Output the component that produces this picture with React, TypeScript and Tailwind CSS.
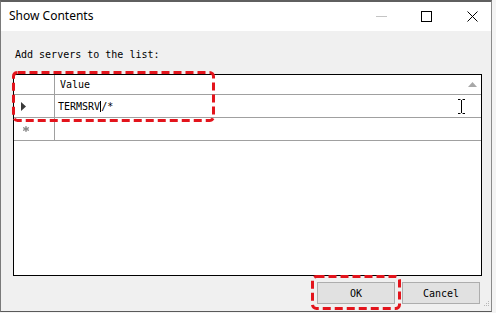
import React from "react"

const mono = { fontFamily: '"DejaVu Sans Mono", "Liberation Mono", monospace' }

function DashBox({ x, y, w, h }: { x: number; y: number; w: number; h: number }) {
  return (
    <svg
      className="absolute pointer-events-none"
      style={{ left: x, top: y }}
      width={w}
      height={h}
    >
      <rect
        x={1.5}
        y={1.5}
        width={w - 3}
        height={h - 3}
        rx={4}
        fill="none"
        stroke="#e3141c"
        strokeWidth={3}
        strokeDasharray="8 4"
      />
    </svg>
  )
}

export default function App() {
  return (
    <div className="relative w-[496px] h-[313px] bg-[#f4f4f4] overflow-hidden">
      <div className="flex flex-col w-[492px] h-[312px] border-t-2 border-l border-r border-b border-t-[#5f5f5f] border-l-[#7a7a7a] border-r-[#8a8a8a] border-b-[#5a5a5a] bg-[#f0f0f0]">
        {/* title bar */}
        <div className="flex items-center h-[29px] bg-white">
          <span
            className="flex-1 pl-[8px] pb-[1px] text-[12px] text-black"
            style={{ fontFamily: '"Noto Sans", "Liberation Sans", sans-serif' }}
          >
            Show Contents
          </span>
          <svg width="11" height="11" className="mr-[34px]">
            <line x1="0" y1="5.5" x2="11" y2="5.5" stroke="#c4c4c4" strokeWidth="1" />
          </svg>
          <svg width="11" height="11" className="mr-[35px]">
            <rect x="0.5" y="0.5" width="10" height="10" fill="none" stroke="#000" strokeWidth="1" />
          </svg>
          <svg width="11" height="11" className="mr-[13px]">
            <path d="M0.5 0.5 L10.5 10.5 M10.5 0.5 L0.5 10.5" stroke="#000" strokeWidth="1" />
          </svg>
        </div>

        {/* body */}
        <div className="flex flex-col flex-1 pt-[18px]">
          <div className="pl-[14px] text-[10px] leading-[12px] text-black" style={mono}>
            Add servers to the list:
          </div>

          <div className="mt-[13px] ml-[12px] w-[469px] h-[202px] border border-black bg-white flex flex-col">
            {/* header row */}
            <div className="flex h-[20px] border-b border-[#a0a0a0]">
              <div className="w-[41px] border-r border-[#a0a0a0]" />
              <div className="flex-1 flex items-center pl-[5px] text-[10px] text-black" style={mono}>
                Value
              </div>
              <svg width="9" height="5" className="self-center mr-[4px]">
                <path d="M0 5 L4.5 0 L9 5 Z" fill="#a8a8a8" />
              </svg>
            </div>

            {/* row 1 */}
            <div className="flex h-[23px] border-b border-[#a0a0a0]">
              <div className="w-[41px] border-r border-[#a0a0a0] flex items-center pl-[7px]">
                <svg width="5" height="9">
                  <path d="M0 0 L5 4.5 L0 9 Z" fill="#3a3a3a" />
                </svg>
              </div>
              <div className="flex-1 flex items-center pl-[3px] text-[10px] text-black" style={mono}>
                <span>TERMSRV</span>
                <span className="w-px h-[11px] bg-black" />
                <span>/*</span>
              </div>
              <svg width="7" height="15" className="self-center mr-[16px]">
                <path d="M0 0.5 H2.5 M4.5 0.5 H7 M3.5 1 V14 M0 14.5 H2.5 M4.5 14.5 H7" stroke="#000" strokeWidth="1" />
              </svg>
            </div>

            {/* new row */}
            <div className="flex h-[23px] border-b border-[#a0a0a0]">
              <div className="w-[41px] border-r border-[#a0a0a0] flex items-center pl-[9px]">
                <svg width="6" height="6">
                  <path d="M3 0 V6 M0 1.5 L6 4.5 M6 1.5 L0 4.5" stroke="#8a8a8a" strokeWidth="1.2" />
                  <circle cx="3" cy="3" r="1.6" fill="#8a8a8a" />
                </svg>
              </div>
              <div className="flex-1" />
            </div>
            <div className="flex-1" />
          </div>

          {/* buttons */}
          <div className="flex justify-end gap-[7px] mt-[6px] mr-[11px]">
            <button
              className="w-[78px] h-[22px] bg-[#e1e1e1] border border-[#adadad] text-[10px] text-black"
              style={mono}
            >
              OK
            </button>
            <button
              className="w-[78px] h-[22px] bg-[#e1e1e1] border border-[#adadad] text-[10px] text-black"
              style={mono}
            >
              Cancel
            </button>
          </div>

          {/* resize grip */}
          <div className="flex justify-end mr-[1px] mt-[-3px]">
            <svg width="6" height="6">
              <rect x="4" y="0" width="1" height="1" fill="#b8b8b8" />
              <rect x="2" y="2" width="1" height="1" fill="#b8b8b8" />
              <rect x="4" y="2" width="1" height="1" fill="#b8b8b8" />
              <rect x="0" y="4" width="1" height="1" fill="#b8b8b8" />
              <rect x="2" y="4" width="1" height="1" fill="#b8b8b8" />
              <rect x="4" y="4" width="1" height="1" fill="#b8b8b8" />
            </svg>
          </div>
        </div>
      </div>

      <DashBox x={12} y={71} w={203} h={51} />
      <DashBox x={311} y={275} w={90} h={35} />
    </div>
  )
}
